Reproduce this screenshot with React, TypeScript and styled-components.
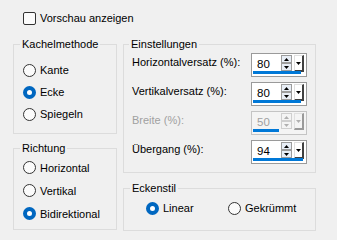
import React from "react";
import styled, { createGlobalStyle } from "styled-components";

const GlobalStyle = createGlobalStyle`
  html, body {
    margin: 0;
    padding: 0;
    background: #f0f0f0;
  }
`;

const Page = styled.div`
  width: 337px;
  height: 240px;
  box-sizing: border-box;
  padding: 10px 0 0 13px;
  background: #f0f0f0;
  font-family: "Liberation Sans", Arial, sans-serif;
  font-size: 11px;
  color: #000;
`;

const CheckRow = styled.label`
  display: flex;
  align-items: center;
  height: 16px;
  margin-left: 10px;
  gap: 4px;
`;

const CheckBox = styled.span`
  width: 13px;
  height: 13px;
  box-sizing: border-box;
  border: 1px solid #333;
  border-radius: 2px;
  background: #fbfbfb;
`;

const Columns = styled.div`
  display: flex;
  gap: 6px;
  margin-top: 10px;
`;

const Column = styled.div<{ $w: number; $gap: number }>`
  display: flex;
  flex-direction: column;
  width: ${(p) => p.$w}px;
  gap: ${(p) => p.$gap}px;
`;

const Group = styled.fieldset<{ $pad: string; $h: number }>`
  margin: 0;
  border: 1px solid #dcdcdc;
  padding: ${(p) => p.$pad};
  height: ${(p) => p.$h}px;
  min-width: 0;
  box-sizing: border-box;
`;

const Legend = styled.legend`
  padding: 0 2px;
  margin-left: -3px;
  line-height: 16px;
  height: 16px;
`;

const RadioList = styled.div<{ $row: number }>`
  display: flex;
  flex-direction: column;
  & > * {
    height: ${(p) => p.$row}px;
  }
`;

const RadioRow = styled.div<{ $w?: number }>`
  display: flex;
  align-items: center;
  gap: 4px;
  width: ${(p) => (p.$w ? `${p.$w}px` : "auto")};
`;

const RadioDot = styled.span<{ $on?: boolean }>`
  width: 13px;
  height: 13px;
  flex: none;
  box-sizing: border-box;
  border-radius: 50%;
  border: ${(p) => (p.$on ? "4px solid #0067c0" : "1px solid #333")};
  background: ${(p) => (p.$on ? "#fff" : "#fbfbfb")};
`;

const FieldRows = styled.div`
  display: flex;
  flex-direction: column;
  gap: 5px;
`;

const FieldRow = styled.div`
  display: flex;
  align-items: flex-start;
`;

const FieldLabel = styled.span<{ $off?: boolean }>`
  width: 119px;
  line-height: 18px;
  color: ${(p) => (p.$off ? "#a0a0a0" : "#000")};
`;

const Spin = styled.div<{ $off?: boolean }>`
  width: 56px;
  height: 24px;
  box-sizing: border-box;
  border: 1px solid ${(p) => (p.$off ? "#c4c4c4" : "#9a9a9a")};
  background: ${(p) => (p.$off ? "#f4f4f4" : "#fff")};
  padding: 1px 1px 2px 1px;
  display: flex;
  flex-direction: column;
`;

const SpinTop = styled.div`
  display: flex;
  height: 16px;
  align-items: flex-start;
`;

const SpinValue = styled.span<{ $off?: boolean }>`
  flex: 1;
  padding-left: 4px;
  line-height: 18px;
  font-size: 11.5px;
  color: ${(p) => (p.$off ? "#a0a0a0" : "#000")};
`;

const Arrows = styled.div`
  display: flex;
  flex-direction: column;
  margin-right: 2px;
`;

const ArrowBtn = styled.span<{ $off?: boolean }>`
  width: 11px;
  height: 8px;
  box-sizing: border-box;
  border: 1px solid ${(p) => (p.$off ? "#cfcfcf" : "#9c9c9c")};
  background: ${(p) => (p.$off ? "#f4f4f4" : "#e8eef6")};
  display: flex;
  align-items: center;
  justify-content: center;
`;

const DropBtn = styled.span<{ $off?: boolean }>`
  width: 10px;
  height: 17px;
  margin-right: 1px;
  box-sizing: border-box;
  background: ${(p) => (p.$off ? "#f4f4f4" : "#fff")};
  border-right: 2px solid ${(p) => (p.$off ? "#9a9a9a" : "#404040")};
  border-bottom: 2px solid ${(p) => (p.$off ? "#9a9a9a" : "#404040")};
  border-top: 1px solid #e0e0e0;
  border-left: 1px solid #e0e0e0;
  display: flex;
  align-items: center;
  justify-content: center;
`;

const Bar = styled.div`
  height: 3px;
  background: #0078d7;
`;

const RadioLine = styled.div`
  display: flex;
  align-items: center;
  height: 22px;
  margin-left: 13px;
`;

const Tri = ({ up, color }: { up?: boolean; color: string }) => (
  <svg width="5" height="3" viewBox="0 0 5 3">
    <path d={up ? "M0 3 L2.5 0 L5 3 Z" : "M0 0 L5 0 L2.5 3 Z"} fill={color} />
  </svg>
);

type SpinProps = { value: number; bar: number; off?: boolean };

const Spinner = ({ value, bar, off }: SpinProps) => {
  const c = off ? "#b0b0b0" : "#000";
  return (
    <Spin $off={off}>
      <SpinTop>
        <SpinValue $off={off}>{value}</SpinValue>
        <Arrows>
          <ArrowBtn $off={off}>
            <Tri up color={c} />
          </ArrowBtn>
          <ArrowBtn $off={off}>
            <Tri color={c} />
          </ArrowBtn>
        </Arrows>
        <DropBtn $off={off}>
          <Tri color={c} />
        </DropBtn>
      </SpinTop>
      <Bar style={{ width: bar }} />
    </Spin>
  );
};

const Radio = ({ label, on, w }: { label: string; on?: boolean; w?: number }) => (
  <RadioRow $w={w}>
    <RadioDot $on={on} />
    <span>{label}</span>
  </RadioRow>
);

const fields = [
  { label: "Horizontalversatz (%):", value: 80, bar: 48 },
  { label: "Vertikalversatz (%):", value: 80, bar: 48 },
  { label: "Breite (%):", value: 50, bar: 26, off: true },
  { label: "Übergang (%):", value: 94, bar: 50 },
];

export default function App() {
  return (
    <>
      <GlobalStyle />
      <Page>
        <CheckRow>
          <CheckBox />
          <span>Vorschau anzeigen</span>
        </CheckRow>
        <Columns>
          <Column $w={104} $gap={6}>
            <Group $pad="7px 0 8px 9px" $h={98}>
              <Legend>Kachelmethode</Legend>
              <RadioList $row={22}>
                <Radio label="Kante" />
                <Radio label="Ecke" on />
                <Radio label="Spiegeln" />
              </RadioList>
            </Group>
            <Group $pad="0 0 4px 9px" $h={90}>
              <Legend>Richtung</Legend>
              <RadioList $row={23}>
                <Radio label="Horizontal" />
                <Radio label="Vertikal" />
                <Radio label="Bidirektional" on />
              </RadioList>
            </Group>
          </Column>
          <Column $w={193} $gap={7}>
            <Group $pad="1px 0 8px 8px" $h={137}>
              <Legend>Einstellungen</Legend>
              <FieldRows>
                {fields.map((f) => (
                  <FieldRow key={f.label}>
                    <FieldLabel $off={f.off}>{f.label}</FieldLabel>
                    <Spinner value={f.value} bar={f.bar} off={f.off} />
                  </FieldRow>
                ))}
              </FieldRows>
            </Group>
            <Group $pad="1px 0 9px 9px" $h={51}>
              <Legend>Eckenstil</Legend>
              <RadioLine>
                <Radio label="Linear" on w={82} />
                <Radio label="Gekrümmt" />
              </RadioLine>
            </Group>
          </Column>
        </Columns>
      </Page>
    </>
  );
}
